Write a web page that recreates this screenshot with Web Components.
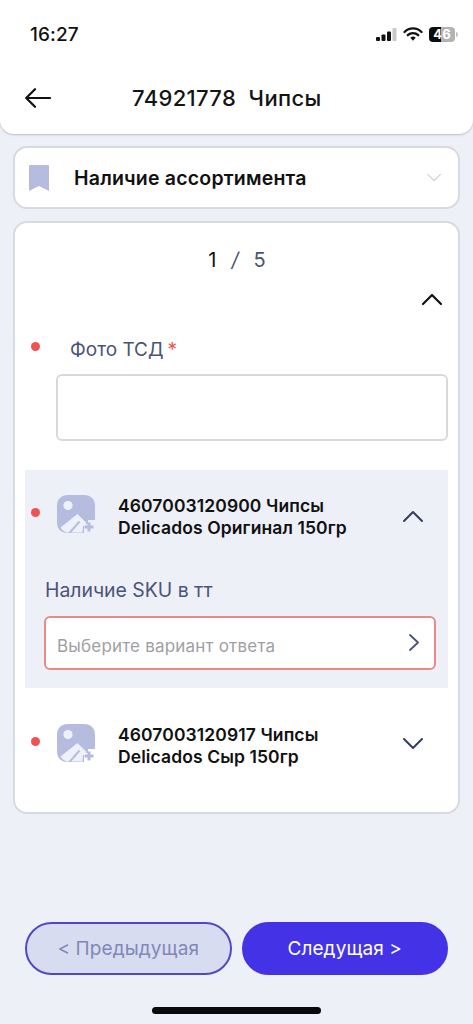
<!DOCTYPE html>
<html lang="ru"><head><meta charset="utf-8"><title>Чипсы</title>
<style>
html,body{margin:0;padding:0;background:#eef0f8;}
body{font-family:Inter,"Liberation Sans",sans-serif;width:473px;height:1024px;overflow:hidden;}
</style></head><body>
<app-screen></app-screen>
<script>
const def=(name,html,init)=>{customElements.define(name,class extends HTMLElement{constructor(){super();this.attachShadow({mode:'open'}).innerHTML=html;}connectedCallback(){init&&init(this);}});};
const chev={up:'M1 10 L10 1 L19 10',down:'M1 1 L10 10 L19 1'};
customElements.define('icon-chevron',class extends HTMLElement{
 static get observedAttributes(){return ['dir'];}
 constructor(){super();this.attachShadow({mode:'open'}).innerHTML=`<style>:host{display:block;width:20px;height:11px;line-height:0}svg{overflow:visible}path{fill:none;stroke:var(--c,#353d5e);stroke-width:var(--w,2);stroke-linecap:round;stroke-linejoin:round}</style><svg width="20" height="11" viewBox="0 0 20 11"><path/></svg>`;this.draw();}
 attributeChangedCallback(){this.draw();}
 connectedCallback(){this.draw();}
 draw(){this.shadowRoot.querySelector('path').setAttribute('d',chev[this.getAttribute('dir')||'down']);}
});
def('icon-photo',`<style>:host{display:block;width:38px;height:38px;line-height:0}</style>
<svg width="38" height="38" viewBox="0 0 38 38"><path fill="#b5bcdf" d="M11 0H27C34 0 38 4 38 11V25H31V29H27V38H11C4 38 0 34 0 27V11C0 4 4 0 11 0Z"/>
<circle cx="11" cy="10.500" r="4.600" fill="#eef1fa"/>
<path fill="#eef1fa" d="M3.500 32.500L20.500 19L29.500 28L26 31.500L25.500 37.500L11 37.500C8 37.500 5 35 3.500 32.500Z"/>
<path fill="none" stroke="#b5bcdf" stroke-width="2" d="M12.500 38L22.500 26.500"/>
<path fill="#b5bcdf" d="M30.500 27.500h3v3h3v3h-3v3h-3v-3h-3v-3h3Z"/></svg>`);
def('status-bar',`<style>:host{display:flex;align-items:center;justify-content:space-between;height:68px;padding:0 15px 0 30px;box-sizing:border-box;color:#111}
.t{font:500 19px/1 Inter,sans-serif;letter-spacing:.1px;margin-top:0}
.r{display:flex;align-items:center;gap:5px}
.b{position:relative;width:26px;height:15px;border-radius:4px;background:linear-gradient(90deg,#0d0d0d 46%,#b3b3b3 46%);color:#fff;font:700 13px/15px Inter,sans-serif;text-align:center;letter-spacing:.2px}
.b:after{content:"";position:absolute;right:-3px;top:5px;width:2px;height:5px;background:#c4c4c4;border-radius:0 2px 2px 0}</style>
<span class="t">16:27</span><span class="r">
<svg width="22" height="13" viewBox="0 0 22 13"><rect x="0" y="9" width="4" height="4" rx="1" fill="#111"/><rect x="5.500" y="6.500" width="4" height="6.500" rx="1" fill="#111"/><rect x="11" y="3.500" width="4" height="9.500" rx="1" fill="#111"/><rect x="16.500" y="0" width="4" height="13" rx="1" fill="#c8c8c8"/></svg>
<svg width="20" height="14" viewBox="0 0 20 14"><path d="M1.500 5A12 12 0 0 1 18.500 5" fill="none" stroke="#111" stroke-width="2.300" stroke-linecap="round"/><path d="M4.800 8.200A7.500 7.500 0 0 1 15.200 8.200" fill="none" stroke="#111" stroke-width="2.300" stroke-linecap="round"/><path d="M7.300 10.800L10 13.700L12.700 10.800A3.800 3.800 0 0 0 7.300 10.800Z" fill="#111"/></svg>
<span class="b" style="margin-left:1px;margin-right:3px">46</span></span>`);
def('app-header',`<style>:host{display:block;height:134px;box-sizing:border-box;background:#fff;border-radius:0 0 14px 14px;box-shadow:0 1px 2px rgba(120,125,150,.45)}
.n{display:flex;align-items:center;height:60px;padding-left:25px}
svg{flex:none;display:block}
h1{margin:0 0 0 81px;font:500 22px/1 Inter,sans-serif;color:#141414;white-space:pre;letter-spacing:.35px}</style>
<status-bar></status-bar><div class="n"><svg width="26" height="20" viewBox="0 0 26 20"><path d="M25 10H1.500M10 1.200L1.200 10L10 18.800" fill="none" stroke="#111" stroke-width="2.200" stroke-linecap="round" stroke-linejoin="round"/></svg><h1><slot></slot></h1></div>`);
def('section-select',`<style>:host{display:flex;align-items:center;height:63px;box-sizing:border-box;margin:12px 13px 0;background:#fff;border:2px solid #d9dae1;border-radius:14px;padding:0 19px 0 14px;font:600 19.500px/1 Inter,sans-serif;letter-spacing:.2px;color:#111}
svg{flex:none}span{flex:1;margin-left:25px;padding-top:2px}icon-chevron{width:14px;--c:#c6cbe2;--w:1.500;transform:scale(.7)}</style>
<svg width="20" height="26" viewBox="0 0 20 26"><path d="M1 0H19a1 1 0 0 1 1 1V26L10 21L0 26V1a1 1 0 0 1 1-1Z" fill="#b5bcdf"/></svg><span><slot></slot></span><icon-chevron dir="down"></icon-chevron>`);
def('main-card',`<style>:host{display:block;height:593px;box-sizing:border-box;margin:12px 13px 0;background:#fff;border:2px solid #d9dae1;border-radius:14px;padding:25px 10px 0}</style><slot></slot>`);
def('page-counter',`<style>:host{display:flex;justify-content:center;gap:15px;font:400 20px/24px Inter,sans-serif;color:#111;padding-left:1px}.a{color:#4a5378;font-style:italic}.b{color:#4a5378}</style><span>1</span><span class="a">/</span><span class="b">5</span>`);
def('photo-field',`<style>:host{display:block}
.top{display:flex;justify-content:flex-end;padding:22px 0 0;margin-right:6px}
icon-chevron{--c:#111;--w:2.200}
.l{display:flex;align-items:center;margin-top:31px;height:28px}
.dot{width:9px;height:9px;border-radius:50%;background:#ef5350;margin:-8px 0 0 6px}
.lb{margin-left:30px;font:400 19px/28px Inter,sans-serif;color:#4a5378}.s{color:#ef5350;margin-left:4px}
.box{margin:10px 0 29px 31px;height:67px;box-sizing:border-box;border:2px solid #d8d8dc;border-radius:6px;background:#fff}</style>
<div class="top"><icon-chevron dir="up"></icon-chevron></div>
<div class="l"><span class="dot"></span><span class="lb">Фото ТСД<span class="s">*</span></span></div><div class="box"></div>`);
def('sku-item',`<style>:host{display:block;box-sizing:border-box;font-family:Inter,sans-serif}
:host([open]){background:#eef0f8;height:218px}
.h{display:flex;align-items:center;height:38px;padding-top:25px}
.dot{flex:none;width:9px;height:9px;border-radius:50%;background:#ef5350;margin:-4px 0 0 6px}
icon-photo{flex:none;margin-left:17px}
.t{flex:none;width:275px;margin:0 0 0 23px;font:600 17.500px/21.500px Inter,sans-serif;color:#111;letter-spacing:.1px;padding-top:5px}
icon-chevron{flex:none;margin-left:10px;margin-top:1px}
:host([open]) icon-chevron{margin-top:4px}
.b{display:none;padding:45px 12px 0 19px}
:host([open]) .b{display:block}
.q{font:400 19.400px/24px Inter,sans-serif;color:#4a5378;margin-left:1px}
.s{display:flex;align-items:center;justify-content:space-between;height:54px;box-sizing:border-box;margin-top:14px;background:#fff;border:2px solid #e98a8a;border-radius:6px;padding:0 15px 0 11px;font:400 17px/1 Inter,sans-serif;color:#a0a0a4;letter-spacing:.2px}
.s span{padding-top:6px}
.s svg{flex:none;margin-top:-2px}
</style><div class="h"><span class="dot"></span><icon-photo></icon-photo><div class="t"><slot></slot></div><icon-chevron></icon-chevron></div>
<div class="b"><div class="q">Наличие SKU в тт</div><div class="s"><span>Выберите вариант ответа</span><svg width="10" height="17" viewBox="0 0 10 17"><path d="M1 1L9 8.500L1 16" fill="none" stroke="#4a5378" stroke-width="1.800" stroke-linecap="round" stroke-linejoin="round"/></svg></div></div>`,
 e=>{e.shadowRoot.querySelector('icon-chevron').setAttribute('dir',e.hasAttribute('open')?'up':'down');});
def('nav-button',`<style>:host{display:flex;align-items:center;justify-content:center;flex:1;height:53px;box-sizing:border-box;border-radius:27px;border:2px solid #4433e6;font:400 19px/1 Inter,sans-serif;background:#4433e6;color:#fff;letter-spacing:.1px}
:host([disabled]){background:#d8dcf0;border-color:#5048c8;color:#8088b8}</style><slot></slot>`);
def('nav-bar',`<style>:host{display:flex;gap:10px;margin:108px 25px 0}</style><slot></slot>`);
def('home-bar',`<style>:host{display:block;width:169px;height:7px;margin:32px auto 0;border-radius:4px;background:#0a0a0a}</style>`);
def('app-screen',`<style>:host{display:block;width:473px;height:1024px;overflow:hidden;background:#eef0f8}</style>
<app-header>74921778  Чипсы</app-header>
<section-select>Наличие ассортимента</section-select>
<main-card><page-counter></page-counter><photo-field></photo-field>
<sku-item open>4607003120900 Чипсы Delicados Оригинал 150гр</sku-item>
<div style="height:11px"></div>
<sku-item>4607003120917 Чипсы Delicados Сыр 150гр</sku-item></main-card>
<nav-bar><nav-button disabled>&lt; Предыдущая</nav-button><nav-button>Следущая &gt;</nav-button></nav-bar>
<home-bar></home-bar>`);
</script></body></html>
